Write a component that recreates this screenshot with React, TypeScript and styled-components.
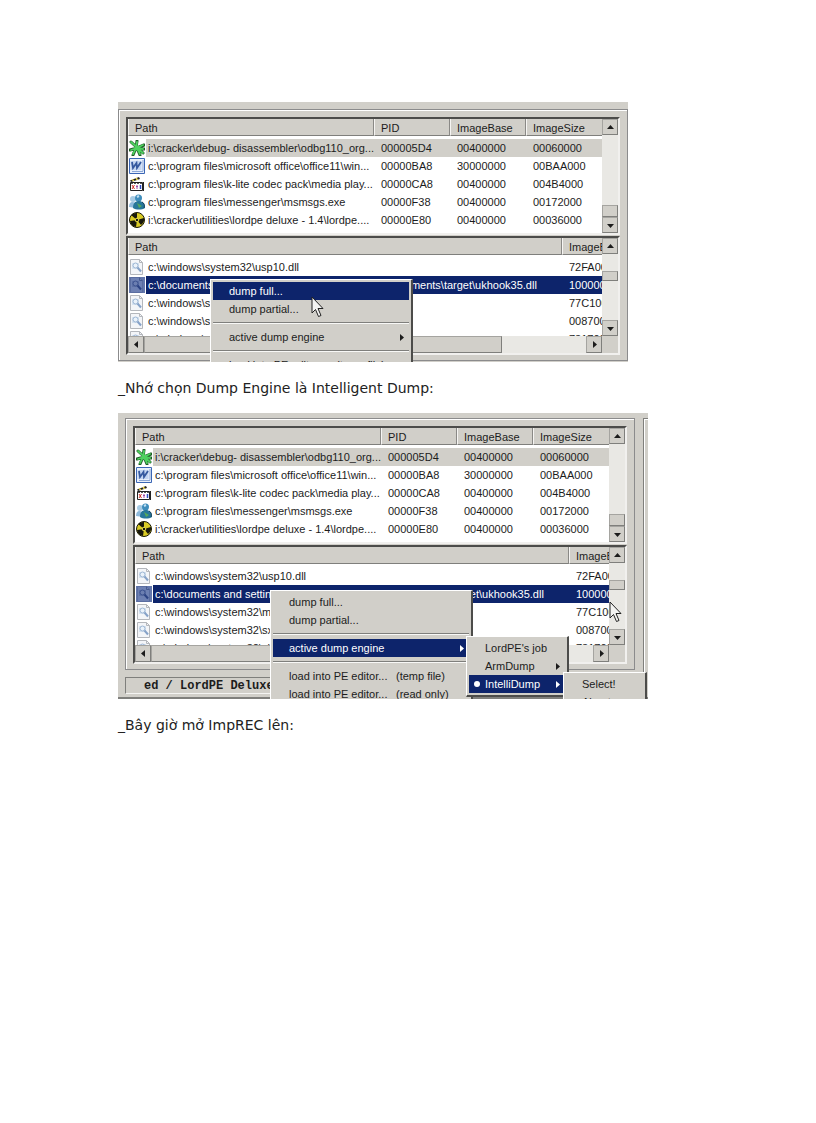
import React from "react";
import styled, { createGlobalStyle, css } from "styled-components";

const face = "#d1cfc9";
const track = "#e9e8e4";
const navy = "#0d246b";
const shade = "#7f7f7c";
const dark = "#4c4c4a";

const GlobalStyle = createGlobalStyle`
  * { box-sizing: border-box; }
  body { margin: 0; background: #fff; }
  button { font: inherit; color: inherit; border: 0; padding: 0; margin: 0; background: none; }
`;

const Page = styled.main`
  padding: 102px 118px;
  font-family: "DejaVu Sans", Verdana, sans-serif;
  font-size: 14px;
  line-height: 16px;
  color: #222;
`;

const Note = styled.p`
  margin: 18px 0 17px;
`;

const Shot = styled.figure<{ $max: number; $height: number }>`
  position: relative;
  overflow: hidden;
  margin: 0;
  max-width: ${(p) => p.$max}px;
  height: ${(p) => p.$height}px;
  background: ${face};
  font-family: "Liberation Sans", Arial, sans-serif;
  font-size: 11px;
  line-height: 18px;
  color: #1c1c1c;
  white-space: nowrap;
`;

const PlainFrame = styled.div`
  padding-top: 7px;
`;

const WindowFrame = styled.div`
  display: grid;
  grid-template-columns: minmax(0, 1fr) 5px;
  column-gap: 8px;
  height: 100%;
  padding: 5px 0 0 7px;
  border-bottom: 2px solid ${shade};
`;

const NextGroup = styled.div`
  border-top: 1px solid ${shade};
  border-left: 1px solid ${shade};
  box-shadow: inset 1px 1px 0 #fff;
`;

const Group = styled.section`
  display: flex;
  flex-direction: column;
  gap: 1px;
  padding: 7px 7px 5px;
  border: 1px solid #8b8b8c;
  box-shadow: inset 1px 1px 0 #fff;
`;

const StatusBar = styled.div`
  margin-top: 7px;
  height: 17px;
  padding-left: 18px;
  border: 1px solid ${shade};
  border-bottom-color: #f4f4f2;
  font: bold 12px/17px "Liberation Mono", "Courier New", monospace;
`;

const ListFrame = styled.div`
  border: 2px solid ${dark};
  border-right-color: #f1f0ee;
  border-bottom-color: #f1f0ee;
  background: #fff;
`;

const ListBody = styled.div<{ $height: number }>`
  display: grid;
  grid-template-columns: minmax(0, 1fr) 16px;
  height: ${(p) => p.$height}px;
  overflow: hidden;
`;

const Table = styled.table<{ $cols: string }>`
  display: block;
  overflow: hidden;
  tr {
    display: grid;
    grid-template-columns: ${(p) => p.$cols};
  }
  thead, tbody { display: block; }
  thead { margin-bottom: 3px; }
`;

const Head = styled.th`
  height: 17px;
  padding: 0 6px;
  overflow: hidden;
  background: ${face};
  border-left: 1px solid #f6f5f3;
  border-right: 1px solid #8a8986;
  border-bottom: 1px solid ${shade};
  text-align: left;
  font-weight: normal;
  line-height: 18px;
  &:last-child { border-right: 0; }
`;

type Mark = "none" | "inactive" | "active";

const marked = css<{ $mark: Mark }>`
  ${(p) => p.$mark === "inactive" && css`background: ${face};`}
  ${(p) => p.$mark === "active" && css`background: ${navy}; color: #fff;`}
`;

const Cell = styled.td<{ $mark: Mark }>`
  height: 18px;
  padding: 0 0 0 7px;
  overflow: hidden;
  ${marked}
`;

const PathCell = styled.td`
  display: flex;
  height: 18px;
  padding: 0;
  overflow: hidden;
`;

const IconSlot = styled.span`
  flex: 0 0 18px;
  height: 18px;
  padding: 1px;
  svg { display: block; }
`;

const PathLabel = styled.span<{ $mark: Mark }>`
  flex: 1;
  min-width: 0;
  padding-left: 2px;
  overflow: hidden;
  ${marked}
`;

const VScroll = styled.div`
  display: flex;
  flex-direction: column;
  background: ${track};
`;

const HScroll = styled.div`
  display: flex;
  height: 17px;
  background: ${track};
`;

const raised = css`
  background: ${face};
  border: 1px solid ${shade};
  border-top-color: #a5a4a0;
  border-left-color: #a5a4a0;
`;

const ScrollButton = styled.button`
  ${raised}
  display: grid;
  place-items: center;
  flex: 0 0 16px;
`;

const Thumb = styled.div<{ $before?: number; $size: number }>`
  ${raised}
  flex: 0 0 ${(p) => p.$size}px;
  ${(p) => (p.$before === undefined ? "margin-top: auto;" : `margin-top: ${p.$before}px; margin-bottom: auto;`)}
`;

const HThumb = styled.div`
  ${raised}
  flex: 0 1 358px;
  margin-right: auto;
`;

const Corner = styled.div`
  flex: 0 0 16px;
  background: ${face};
`;

const Menu = styled.div<{ $x: number; $y: number; $w: number }>`
  position: absolute;
  left: ${(p) => p.$x}px;
  top: ${(p) => p.$y}px;
  width: ${(p) => p.$w}px;
  padding: 2px;
  background: ${face};
  border: 1px solid #fff;
  border-right: 2px solid ${dark};
  border-bottom: 2px solid ${dark};
`;

const Item = styled.button<{ $on?: boolean }>`
  position: relative;
  display: flex;
  align-items: center;
  width: 100%;
  height: 18px;
  padding: 0 4px 0 16px;
  text-align: left;
  ${(p) => p.$on && css`background: ${navy}; color: #fff;`}
  svg { margin-left: auto; }
`;

const Wide = styled.span`
  flex: 0 0 107px;
`;

const Bullet = styled.i`
  position: absolute;
  left: 5px;
  top: 6px;
  width: 6px;
  height: 6px;
  border-radius: 50%;
  background: #fff;
`;

const Rule = styled.hr`
  height: 2px;
  margin: 4px 0;
  border: 0;
  border-top: 1px solid ${shade};
  border-bottom: 1px solid #f8f8f6;
`;

const Pointer = styled.svg<{ $x: number; $y: number }>`
  position: absolute;
  left: ${(p) => p.$x}px;
  top: ${(p) => p.$y}px;
`;

const arrowPaths = {
  up: "M0 5h7L3.500 1z",
  down: "M0 2h7L3.500 6z",
  left: "M5 0v7L1 3.500z",
  right: "M2 0v7l4-3.500z",
};

const Arrow = ({ dir }: { dir: keyof typeof arrowPaths }) => (
  <svg width="7" height="7" viewBox="0 0 7 7" aria-hidden="true">
    <path d={arrowPaths[dir]} fill="currentColor" />
  </svg>
);

const Cursor = ({ x, y }: { x: number; y: number }) => (
  <Pointer $x={x} $y={y} width="13" height="22" viewBox="0 0 13 22" aria-hidden="true">
    <path d="M1 1v16l3.500-3.500 3 7 2.500-1-3-7H12z" fill="#f4f4f2" stroke="#222" />
  </Pointer>
);

type IconName = "bug" | "word" | "clip" | "buddy" | "nuke" | "dll" | "dllOn";

function FileIcon({ name }: { name: IconName }) {
  const box = { width: 16, height: 16, viewBox: "0 0 16 16", "aria-hidden": true } as const;
  switch (name) {
    case "bug":
      return (
        <svg {...box}>
          <path d="M2 2l12 11M8 1l-1 7-3 7M15 5L8 8l-7 2M8 8l7 1M8 8l3 7" fill="none" stroke="#1d5a26" strokeWidth="3" strokeLinecap="round" />
          <path d="M2 2l12 11M8 2l-1 6-3 6M14 5L8 8l-6 2M8 8l6 1M8 8l3 6" fill="none" stroke="#4fd05f" strokeWidth="1.800" strokeLinecap="round" />
          <circle cx="8" cy="8" r="2.500" fill="#4fd05f" />
        </svg>
      );
    case "word":
      return (
        <svg {...box}>
          <path d="M.5.500h15v15H.500z" fill="#e9f0fb" stroke="#3b66b5" />
          <path d="M1.500 3h11v9h-11z" fill="#c3d5f1" />
          <path d="M3 4l1 6 3.500-5 .500 5 4-6" fill="none" stroke="#35599f" strokeWidth="1.800" />
          <path d="M3 13.500h11M14 2v11" stroke="#8aa6d6" />
        </svg>
      );
    case "clip":
      return (
        <svg {...box}>
          <path d="M1 4.500l9-3.500 1 2-9 3z" fill="#222" />
          <path d="M3 3.500l2 1.500M7 2L8.500 4" stroke="#f2dd55" strokeWidth="1.500" />
          <path d="M1.500 6.500h12v8h-12z" fill="#fff" stroke="#222" />
          <path d="M2 7h12" stroke="#222" strokeWidth="1.500" strokeDasharray="2 1" />
          <path d="M3 9l2.500 4M5.500 9L3 13" stroke="#d2342b" />
          <path d="M8 9v4M7 10.500h2" stroke="#a04ca8" />
          <path d="M11.500 9v4" stroke="#2c4bc0" strokeWidth="1.500" />
          <path d="M14.500 6v9" stroke="#222" />
        </svg>
      );
    case "buddy":
      return (
        <svg {...box}>
          <circle cx="4" cy="5" r="3" fill="#a7cbe4" />
          <path d="M0 13c0-5 3-6 6-4l1 5z" fill="#8fbadb" />
          <circle cx="9.500" cy="4" r="3.500" fill="#3f8dbb" />
          <path d="M4 14c0-6 3-7 6-7s6 2 6 7c-3 2-9 2-12 0z" fill="#27779a" />
          <path d="M8 9l5 3-3 2z" fill="#55a85b" />
          <path d="M8 3l2-1" stroke="#c4e2f4" strokeWidth="2" />
          <path d="M13 8c2 1 3 3 2 6" stroke="#173f57" fill="none" />
        </svg>
      );
    case "nuke":
      return (
        <svg {...box}>
          <circle cx="8" cy="8" r="7.500" fill="#d9cb25" stroke="#191904" />
          <path d="M8 8L2 3a8 8 0 016-2zM8 8l7-2a7 7 0 01-3 7zM8 8l-1 7a7 7 0 01-6-6z" fill="#18180c" />
          <circle cx="8" cy="8" r="1.800" fill="#18180c" stroke="#efe24a" />
        </svg>
      );
    default: {
      const on = name === "dllOn";
      return (
        <svg {...box}>
          {on && <path d="M0 0h16v16H0z" fill="#6478ad" />}
          <path d="M1.500.500h9l3 3v12h-12z" fill={on ? "#6d80b3" : "#f3f5f8"} stroke={on ? "#5a6da0" : "#b4b7bc"} />
          <path d="M10.500.500v3h3" fill="none" stroke={on ? "#465a90" : "#b4b7bc"} />
          <path d="M3 4h7v6H3z" fill={on ? "#5b6fa4" : "#d6e3f0"} />
          <circle cx="6.500" cy="6.500" r="2.500" fill={on ? "#6b7eb0" : "#eaf2fa"} stroke={on ? "#3c5290" : "#9db6d4"} />
          <path d="M8.500 8.500l3.500 4" stroke={on ? "#2c4384" : "#86a2c8"} strokeWidth="2" />
        </svg>
      );
    }
  }
}

const processes: { icon: IconName; cells: string[] }[] = [
  { icon: "bug", cells: ["i:\\cracker\\debug- disassembler\\odbg110_org...", "000005D4", "00400000", "00060000"] },
  { icon: "word", cells: ["c:\\program files\\microsoft office\\office11\\win...", "00000BA8", "30000000", "00BAA000"] },
  { icon: "clip", cells: ["c:\\program files\\k-lite codec pack\\media play...", "00000CA8", "00400000", "004B4000"] },
  { icon: "buddy", cells: ["c:\\program files\\messenger\\msmsgs.exe", "00000F38", "00400000", "00172000"] },
  { icon: "nuke", cells: ["i:\\cracker\\utilities\\lordpe deluxe - 1.4\\lordpe....", "00000E80", "00400000", "00036000"] },
];

const modules: { icon: IconName; cells: string[] }[] = [
  { icon: "dll", cells: ["c:\\windows\\system32\\usp10.dll", "72FA0000"] },
  { icon: "dllOn", cells: ["c:\\documents and settings\\administrator.user\\my documents\\target\\ukhook35.dll", "10000000"] },
  { icon: "dll", cells: ["c:\\windows\\system32\\msvcrt.dll", "77C10000"] },
  { icon: "dll", cells: ["c:\\windows\\system32\\sxs.dll", "00870000"] },
  { icon: "dll", cells: ["c:\\windows\\system32\\shell32.dll", "73170000"] },
];

interface ListProps {
  cols: string;
  heads: string[];
  rows: { icon: IconName; cells: string[] }[];
  selected: number;
  mark: Mark;
}

function DataTable({ cols, heads, rows, selected, mark }: ListProps) {
  return (
    <Table $cols={cols} cellSpacing={0}>
      <thead>
        <tr>
          {heads.map((h) => <Head key={h} scope="col">{h}</Head>)}
        </tr>
      </thead>
      <tbody>
        {rows.map((row, i) => {
          const m: Mark = i === selected ? mark : "none";
          const [path, ...rest] = row.cells;
          return (
            <tr key={path}>
              <PathCell>
                <IconSlot><FileIcon name={row.icon} /></IconSlot>
                <PathLabel $mark={m}>{path}</PathLabel>
              </PathCell>
              {rest.map((c, j) => <Cell key={j} $mark={m}>{c}</Cell>)}
            </tr>
          );
        })}
      </tbody>
    </Table>
  );
}

function VerticalBar({ before, size }: { before?: number; size: number }) {
  return (
    <VScroll>
      <ScrollButton aria-label="Scroll up"><Arrow dir="up" /></ScrollButton>
      <Thumb $before={before} $size={size} />
      <ScrollButton aria-label="Scroll down"><Arrow dir="down" /></ScrollButton>
    </VScroll>
  );
}

function Lists() {
  return (
    <Group>
      <ListFrame>
        <ListBody $height={114}>
          <DataTable
            cols="minmax(0, 1fr) 76px 76px 76px"
            heads={["Path", "PID", "ImageBase", "ImageSize"]}
            rows={processes}
            selected={0}
            mark="inactive"
          />
          <VerticalBar size={12} />
        </ListBody>
      </ListFrame>
      <ListFrame>
        <ListBody $height={98}>
          <DataTable
            cols="minmax(0, 1fr) 40px"
            heads={["Path", "ImageBase"]}
            rows={modules}
            selected={1}
            mark="active"
          />
          <VerticalBar before={17} size={10} />
        </ListBody>
        <HScroll>
          <ScrollButton aria-label="Scroll left"><Arrow dir="left" /></ScrollButton>
          <HThumb />
          <ScrollButton aria-label="Scroll right"><Arrow dir="right" /></ScrollButton>
          <Corner />
        </HScroll>
      </ListFrame>
    </Group>
  );
}

interface DumpMenuProps {
  x: number;
  y: number;
  active: "full" | "engine";
  loaders: string[];
}

function DumpMenu({ x, y, active, loaders }: DumpMenuProps) {
  return (
    <Menu $x={x} $y={y} $w={203}>
      <Item $on={active === "full"}>dump full...</Item>
      <Item>dump partial...</Item>
      <Rule />
      <Item $on={active === "engine"}>active dump engine<Arrow dir="right" /></Item>
      <Rule />
      {loaders.map((hint) => (
        <Item key={hint}><Wide>load into PE editor...</Wide>{hint}</Item>
      ))}
    </Menu>
  );
}

export default function App() {
  return (
    <>
      <GlobalStyle />
      <Page>
        <Shot $max={510} $height={260}>
          <PlainFrame>
            <Lists />
          </PlainFrame>
          <DumpMenu x={92} y={177} active="full" loaders={["(temp file)"]} />
          <Cursor x={193} y={194} />
        </Shot>
        <Note>_Nhớ chọn Dump Engine là Intelligent Dump:</Note>
        <Shot $max={530} $height={286}>
          <WindowFrame>
            <div>
              <Lists />
              <StatusBar>ed / LordPE Deluxe</StatusBar>
            </div>
            <NextGroup />
          </WindowFrame>
          <DumpMenu x={152} y={177} active="engine" loaders={["(temp file)", "(read only)"]} />
          <Menu $x={348} $y={223} $w={103}>
            <Item>LordPE's job</Item>
            <Item>ArmDump<Arrow dir="right" /></Item>
            <Item $on><Bullet />IntelliDump<Arrow dir="right" /></Item>
          </Menu>
          <Menu $x={445} $y={259} $w={84}>
            <Item>Select!</Item>
            <Item>About</Item>
          </Menu>
          <Cursor x={491} y={188} />
        </Shot>
        <Note>_Bây giờ mở ImpREC lên:</Note>
      </Page>
    </>
  );
}
